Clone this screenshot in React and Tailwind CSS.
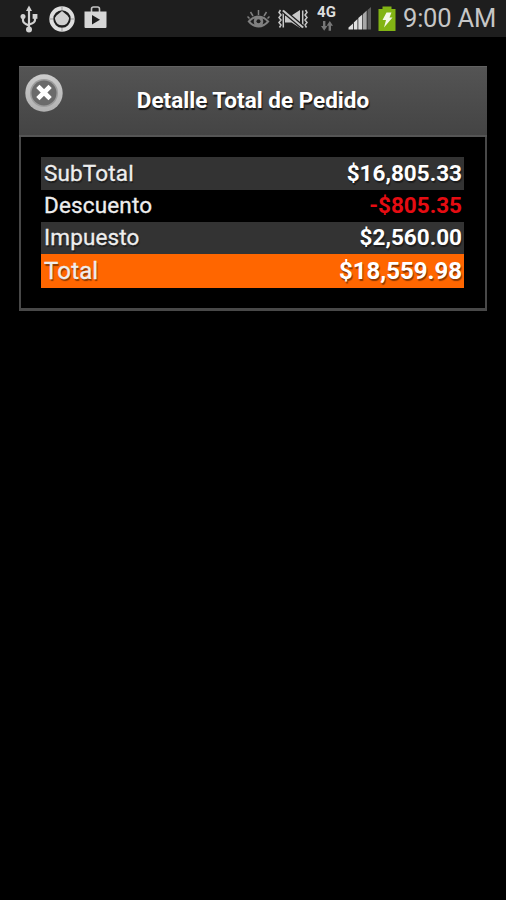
import React from 'react';

const rows = [
  { label: 'SubTotal', value: '$16,805.33', row: 'h-[33px] bg-[#333333] text-[22.5px]', amount: 'text-white' },
  { label: 'Descuento', value: '-$805.35', row: 'h-8 bg-black text-[22.5px]', amount: 'text-[#e60c12]' },
  { label: 'Impuesto', value: '$2,560.00', row: 'h-8 bg-[#333333] text-[22.5px]', amount: 'text-white' },
  { label: 'Total', value: '$18,559.98', row: 'h-[34px] bg-[#ff6600] text-[24px]', amount: 'text-white' },
];

const UsbIcon = () => (
  <svg className="w-[18px] h-[28px] ml-5 shrink-0" viewBox="0 0 18 28" fill="none" stroke="#d2d2d2" strokeWidth="2.2">
    <path d="M9 4v20M3 12v3.5c0 2.500 2 3.500 6 5M15 12v3c0 2.500-2 3.500-6 4.500" />
    <path d="M9 0.500l3 5.500H6z" fill="#d2d2d2" stroke="none" />
    <circle cx="3" cy="11.500" r="2.500" fill="#d2d2d2" stroke="none" />
    <rect x="12.600" y="9" width="4.800" height="4.800" fill="#d2d2d2" stroke="none" />
    <circle cx="9" cy="24.500" r="3" fill="#d2d2d2" stroke="none" />
  </svg>
);

const TargetIcon = () => (
  <svg className="w-[26px] h-[26px] ml-[11px] shrink-0" viewBox="0 0 26 26" fill="none">
    <circle cx="13" cy="13" r="10.700" stroke="#dedede" strokeWidth="4" />
    <path d="M13 0v4M13 22v4M0 13h4M22 13h4" stroke="#999999" strokeWidth="1" />
    <path d="M13 5l5.500 4.500q2 1.800 1.200 4.500a6.900 6.900 0 0 1-13.400 0Q5.500 11.300 7.500 9.500z" fill="#d0d0d0" />
  </svg>
);

const StoreIcon = () => (
  <svg className="w-[23px] h-[23px] ml-[9px] mb-[3px] shrink-0" viewBox="0 0 23 23" fill="none">
    <path d="M7.500 6V3q0-2 2-2h4q2 0 2 2v3" stroke="#c4c4c4" strokeWidth="1.600" />
    <path d="M0.500 5.500h22v15.500q0 1-1 1h-20q-1 0-1-1z" fill="#d6d6d6" />
    <path d="M8 9v9.500l8-4.700z" fill="#1e1e1e" />
  </svg>
);

const EyeIcon = () => (
  <svg className="w-[23px] h-[20px] shrink-0" viewBox="0 0 23 20" fill="none" stroke="#808080">
    <path d="M0.500 12.500Q5.500 6.500 11.500 6.500T22.500 12.500Q17.500 18.500 11.500 18.500T0.500 12.500z" fill="#808080" stroke="none" />
    <path d="M3.300 12.500Q5 10.500 7.500 9.500Q6 12.500 7.500 15.500Q5 14.500 3.300 12.500zM19.700 12.500Q18 10.500 15.500 9.500Q17 12.500 15.500 15.500Q18 14.500 19.700 12.500z" fill="#1e1e1e" stroke="none" />
    <circle cx="11.500" cy="12.300" r="2" fill="#1e1e1e" stroke="none" />
    <path d="M11.500 6V1M6 7L3.500 3M17 7l2.500-4M2.500 9.500L0.500 7.500M20.500 9.500l2-2" strokeWidth="1.500" />
  </svg>
);

const VibrateIcon = () => (
  <svg className="w-[30px] h-[20px] ml-2 shrink-0" viewBox="0 0 30 20" fill="none" stroke="#c8c8c8">
    <path d="M2.500 1l-1.500 2.500 2 2.500-2 2.500 2 2.500-2 2.500 2 2.500-1.500 2.500M27.500 1l1.500 2.500-2 2.500 2 2.500-2 2.500 2 2.500-2 2.500 1.500 2.500M5.300 1.500v17M24.700 1.500v17" strokeWidth="1.500" />
    <path d="M7 6.500h6.500l8.500-5.500v18l-8.500-5.500H7z" fill="#c8c8c8" stroke="none" />
    <path d="M5 1.500l20 17" stroke="#1e1e1e" strokeWidth="4.500" />
    <path d="M5 1.500l20 17" strokeWidth="2" />
  </svg>
);

const ArrowsIcon = () => (
  <svg className="w-[14px] h-[10px]" viewBox="0 0 14 10" fill="#777777">
    <path d="M3 0h2.400v5h2L4.200 9.700 1 5h2zM8.600 9.700H11V4.700h2L9.800 0 6.600 4.700h2z" />
  </svg>
);

const SignalIcon = () => (
  <svg className="w-[24px] h-[23px] ml-3 shrink-0" viewBox="0 0 24 23">
    <path d="M0.500 22.500v-2l4.500-4v6z" fill="#e2e2e2" />
    <path d="M5.800 22.500v-7l3.700-3.500v10.500z" fill="#e2e2e2" />
    <path d="M10.300 22.500V11l4-3.500v15z" fill="#dddddd" />
    <path d="M15 22.500V7l3.700-3.500v19z" fill="#a8a8a8" />
    <path d="M19.500 22.500V3L23 0v22.500z" fill="#5d5d5d" />
  </svg>
);

const BatteryIcon = () => (
  <svg className="w-[18px] h-[26px] ml-[6px] shrink-0" viewBox="0 0 18 26">
    <path d="M4.500 0.500h9v2.500H17.500v22H0.500V3H4.500z" fill="#82b414" />
    <path d="M8.500 6.500h5l-2 5h3L6 21.500l2-7.500H4.500z" fill="#f4f8e8" />
  </svg>
);

const CloseIcon = () => (
  <svg className="w-[38px] h-[38px]" viewBox="0 0 38 38">
    <defs>
      <linearGradient id="ring" x1="0" y1="0" x2="0" y2="1">
        <stop offset="0" stopColor="#cccccc" />
        <stop offset="1" stopColor="#b2b2b2" />
      </linearGradient>
    </defs>
    <circle cx="19" cy="19" r="18.700" fill="url(#ring)" />
    <circle cx="19" cy="19" r="14" fill="#9c9c9c" />
    <circle cx="19" cy="19" r="12.500" fill="#6b6b6b" />
    <path d="M14.500 14l9 9M23.500 14l-9 9" stroke="#ffffff" strokeWidth="4.600" strokeLinecap="square" />
  </svg>
);

const StatusBar = () => (
  <div className="flex h-[37px] items-center bg-[#1e1e1e]">
    <UsbIcon />
    <TargetIcon />
    <StoreIcon />
    <div className="ml-auto flex items-center pr-[10px]">
      <EyeIcon />
      <VibrateIcon />
      <div className="ml-[9px] flex w-[19px] flex-col items-center gap-[2px]">
        <span className="text-[15px] font-bold leading-[13px] text-[#dddddd]">4G</span>
        <ArrowsIcon />
      </div>
      <SignalIcon />
      <BatteryIcon />
      <span className="ml-[7px] w-[93px] whitespace-nowrap pb-px text-[25.500px] leading-9 tracking-[-0.2px] text-[#c6c6c6]">9:00 AM</span>
    </div>
  </div>
);

const App = () => {
  return (
    <div className="h-[900px] w-[506px] overflow-hidden bg-black font-['Roboto',sans-serif]">
      <StatusBar />

      <div className="mx-[19px] mt-[29px] h-[245px] border-2 border-t-0 border-b-3 border-[#484848]">
        <div className="-mx-[2px] flex h-[71px] items-start border-t border-b-2 border-t-[#626262] border-b-[#555555] bg-linear-to-b from-[#545454] to-[#444444]">
          <button type="button" className="ml-[6px] mt-[7px] shrink-0">
            <CloseIcon />
          </button>
          <h1 className="flex-1 self-center pb-[3px] pr-[44px] text-center text-[22.500px] font-bold leading-7 text-white text-shadow-[1px_2px_1px_rgb(0_0_0/0.7)]">
            Detalle Total de Pedido
          </h1>
        </div>

        <div className="ml-5 mr-[21px] mt-5">
          {rows.map(({ label, value, row, amount }) => (
            <div
              key={label}
              className={`flex items-center justify-between pl-[3px] pr-[2px] text-[#eeeeee] text-shadow-[1px_2px_1px_rgb(0_0_0/0.45)] ${row}`}
            >
              <span className="tracking-[0.15px] [-webkit-text-stroke:0.3px_#eeeeee]">{label}</span>
              <span className={`font-bold ${amount}`}>{value}</span>
            </div>
          ))}
        </div>
      </div>
    </div>
  );
};

export default App;
